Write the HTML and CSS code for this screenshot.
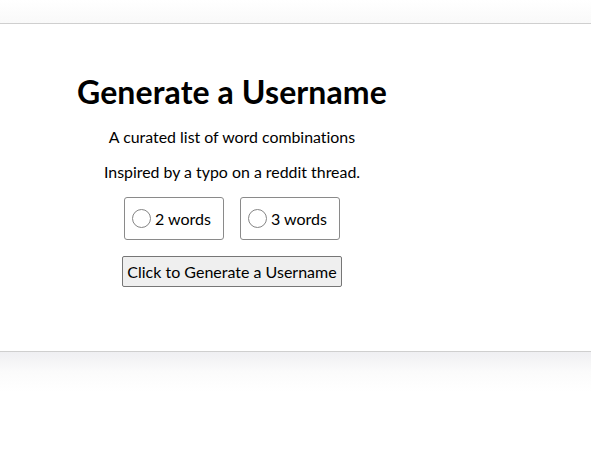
FILE: index.html
```html
<!DOCTYPE html>
<html>
<head>
<meta charset="utf-8">
<link rel="stylesheet" href="styles.css">
</head>
<body>
<div class="topbar"></div>
<main class="card">
  <div class="content">
    <h1 class="title">Generate a Username</h1>
    <p class="line">A curated list of word combinations</p>
    <p class="line">Inspired by a typo on a reddit thread.</p>
    <div class="options">
      <label class="option"><input type="radio" name="words" value="2"> 2 words</label>
      <label class="option"><input type="radio" name="words" value="3"> 3 words</label>
    </div>
    <button class="gen" type="button">Click to Generate a Username</button>
  </div>
</main>
<div class="shadow"></div>
</body>
</html>
```

FILE: styles.css
```css
html, body {
  margin: 0;
  padding: 0;
  background: #fff;
  font-family: Lato, "Open Sans", sans-serif;
  font-variant-ligatures: none;
  color: #000;
}
.topbar {
  height: 23px;
  background: linear-gradient(#ffffff, #f9f9f9);
  border-bottom: 1px solid #cfcfcf;
}
.card {
  height: 328px;
  background: #fff;
  border-bottom: 1px solid #cfcfcf;
  box-sizing: border-box;
}
.content {
  width: 340px;
  margin-left: 62px;
  text-align: center;
  display: flex;
  flex-direction: column;
  align-items: center;
  padding-top: 48px;
}
.title {
  font-size: 32px;
  font-weight: 700;
  margin: 0;
  line-height: 40px;
  letter-spacing: 0.1px;
}
.line {
  font-size: 15.9px;
  margin: 15px 0 0;
  line-height: 19px;
}
.line + .line {
  margin-top: 16px;
}
.options {
  display: flex;
  gap: 16px;
  margin-top: 16px;
}
.option {
  display: flex;
  align-items: center;
  border: 1px solid #8a8a8a;
  border-radius: 3px;
  height: 43px;
  box-sizing: border-box;
  padding: 0 12px 0 7px;
  font-size: 16px;
}
.option input {
  appearance: none;
  width: 19px;
  height: 19px;
  margin: 0 4px 0 0;
  border: 1.5px solid #858585;
  border-radius: 50%;
  background: #fff;
  box-sizing: border-box;
}
.gen {
  margin-top: 16px;
  font-family: Lato, "Open Sans", sans-serif;
  font-variant-ligatures: none;
  font-size: 16px;
  padding: 5px 4px;
  background: #efefef;
  border: 1px solid #767676;
  border-radius: 2px;
  color: #000;
}
.shadow {
  height: 40px;
  background: linear-gradient(#efeff2, #fbfbfb 50%, #ffffff);
}
```
